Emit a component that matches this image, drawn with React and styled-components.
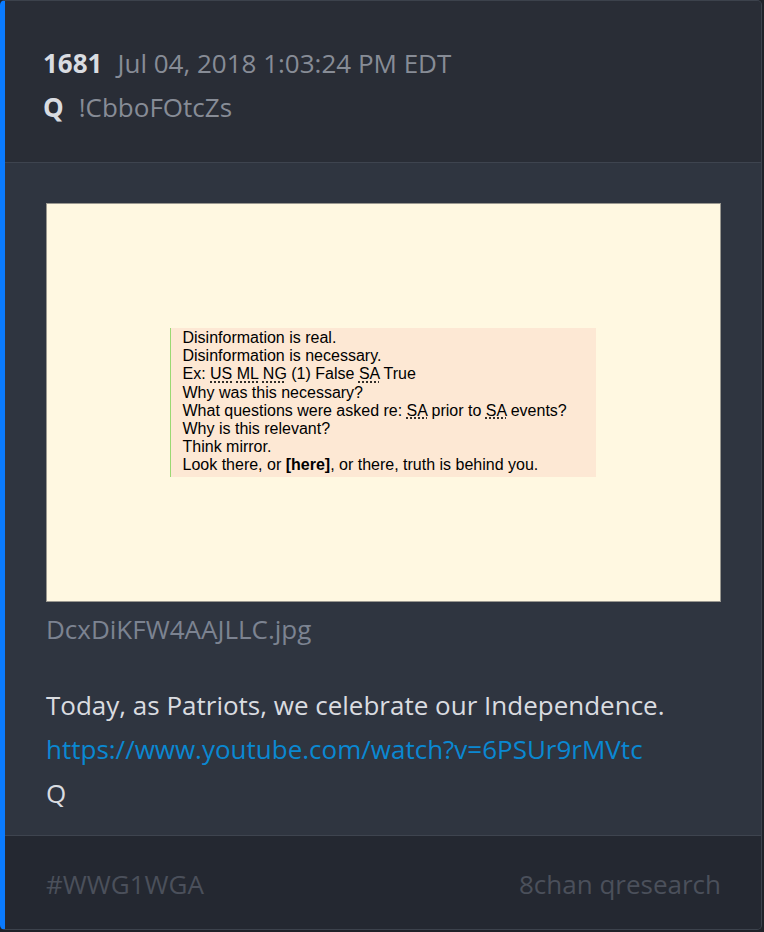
import React from "react"
import styled, { createGlobalStyle } from "styled-components"

const GlobalStyle = createGlobalStyle`
  html, body {
    margin: 0;
    padding: 0;
    background: #1f2229;
  }
  body {
    font-family: "Open Sans", "Noto Sans", sans-serif;
  }
`

const Card = styled.article`
  width: 762px;
  height: 930px;
  box-sizing: border-box;
  display: flex;
  flex-direction: column;
  border: 1px solid #3c424c;
  border-left: 5px solid #0a7bff;
  border-radius: 5px;
  overflow: hidden;
  background: #2f3540;
`

const Header = styled.header`
  background: #292d36;
  padding: 40px 38px 33px;
  border-bottom: 1px solid #3e444f;
`

const MetaRow = styled.div`
  display: flex;
  align-items: baseline;
  gap: 15px;
  font-size: 26px;
  line-height: 44px;
`

const Strong = styled.span`
  font-weight: 700;
  color: #d9dce1;
`

const Muted = styled.span`
  color: #878c96;
`

const Body = styled.section`
  flex: 1;
  padding: 40px 40px 0 41px;
`

const Picture = styled.div`
  height: 399px;
  box-sizing: border-box;
  border: 1px solid #9a9890;
  background: #fff8e1;
  display: flex;
  align-items: center;
  justify-content: center;
`

const Slide = styled.div`
  width: 426px;
  height: 149px;
  box-sizing: border-box;
  margin-right: 2px;
  background: #fde8d4;
  border-left: 1px solid #9ad873;
  padding: 1px 0 0 12px;
  font-family: "Liberation Sans", Arial, sans-serif;
  font-size: 16px;
  line-height: 18.2px;
  color: #000;
`

const Abbr = styled.span`
  text-decoration: underline dotted;
  text-underline-offset: 2px;
`

const FileName = styled.div`
  color: #7c8391;
  font-size: 26px;
  line-height: 30px;
  margin-top: 12px;
`

const Text = styled.div`
  margin-top: 39px;
  color: #dadce0;
  font-size: 26px;
  line-height: 44px;
`

const Link = styled.a`
  color: #0a88d2;
  text-decoration: none;
`

const Footer = styled.footer`
  height: 94px;
  box-sizing: border-box;
  background: #242831;
  border-top: 1px solid #3e444f;
  padding: 2px 40px 0 41px;
  display: flex;
  align-items: center;
  justify-content: space-between;
  font-family: "Liberation Sans Narrow", "Open Sans", sans-serif;
  font-size: 26px;
  color: #4b505b;
`

const App = () => {
  return (
    <>
      <GlobalStyle />
      <Card>
        <Header>
          <MetaRow>
            <Strong>1681</Strong>
            <Muted>Jul 04, 2018 1:03:24 PM EDT</Muted>
          </MetaRow>
          <MetaRow>
            <Strong>Q</Strong>
            <Muted>!CbboFOtcZs</Muted>
          </MetaRow>
        </Header>

        <Body>
          <Picture>
            <Slide>
              <div>Disinformation is real.</div>
              <div>Disinformation is necessary.</div>
              <div>
                Ex: <Abbr>US</Abbr> <Abbr>ML</Abbr> <Abbr>NG</Abbr> (1) False{" "}
                <Abbr>SA</Abbr> True
              </div>
              <div>Why was this necessary?</div>
              <div>
                What questions were asked re: <Abbr>SA</Abbr> prior to{" "}
                <Abbr>SA</Abbr> events?
              </div>
              <div>Why is this relevant?</div>
              <div>Think mirror.</div>
              <div>
                Look there, or <b>[here]</b>, or there, truth is behind you.
              </div>
            </Slide>
          </Picture>
          <FileName>DcxDiKFW4AAJLLC.jpg</FileName>
          <Text>
            <div>Today, as Patriots, we celebrate our Independence.</div>
            <div>
              <Link href="#">https://www.youtube.com/watch?v=6PSUr9rMVtc</Link>
            </div>
            <div>Q</div>
          </Text>
        </Body>

        <Footer>
          <span>#WWG1WGA</span>
          <span>8chan qresearch</span>
        </Footer>
      </Card>
    </>
  )
}

export default App
